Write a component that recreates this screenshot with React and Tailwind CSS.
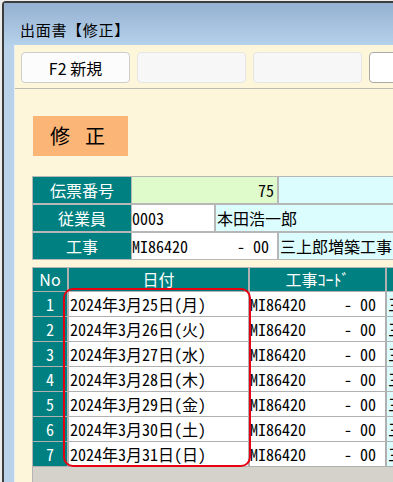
const rows = [
  { no: 1, date: "2024年3月25日(月)" },
  { no: 2, date: "2024年3月26日(火)" },
  { no: 3, date: "2024年3月27日(水)" },
  { no: 4, date: "2024年3月28日(木)" },
  { no: 5, date: "2024年3月29日(金)" },
  { no: 6, date: "2024年3月30日(土)" },
  { no: 7, date: "2024年3月31日(日)" },
];

const ui = "font-['Noto_Sans_CJK_JP',sans-serif]";
const mono = "font-['Noto_Sans_Mono_CJK_JP','Noto_Sans_CJK_JP',monospace]";

export default function App() {
  return (
    <div className={`w-[393px] h-[482px] overflow-hidden bg-[#ececec] pl-[2px] pt-[1px] ${ui}`}>
      <div className="flex h-full flex-col rounded-tl-[4px] border-l-2 border-t-2 border-[#3c3c3c] bg-[#b9d2ea]">
        {/* title bar */}
        <div className="h-[42px] shrink-0 bg-[linear-gradient(180deg,#95b1d1_0%,#a6c1de_50%,#b6d1ea_100%)] pl-[16px] pt-[18px] text-[15px] leading-[18px] tracking-[0.7px] text-black">
          出面書【修正】
        </div>

        <div className="flex flex-1 pl-[10px]">
          <div className="flex flex-1 flex-col border-l border-[#e9eef5] bg-[#fdf6da]">
            {/* toolbar */}
            <div className="flex h-[44px] shrink-0 gap-[7px] border-b border-[#bdbab0] pl-[6px] pt-[7px]">
              <div className="flex h-[31px] w-[109px] shrink-0 items-center justify-center rounded-[4px] border border-[#cdcdcd] bg-[#fcfcfc] text-[16px] text-black">
                F2 新規
              </div>
              <div className="h-[31px] w-[109px] shrink-0 rounded-[4px] border border-[#e6e6e6] bg-[#f7f7f7]" />
              <div className="h-[31px] w-[109px] shrink-0 rounded-[4px] border border-[#e6e6e6] bg-[#f7f7f7]" />
              <div className="h-[31px] w-[109px] shrink-0 rounded-[4px] border border-[#a9a9a9] bg-white" />
            </div>

            {/* content */}
            <div className="flex flex-1 flex-col pl-[17px]">
              <div className="mt-[27px] ml-[1px] flex h-[40px] w-[95px] items-center bg-[#fbb677] pl-[17px] text-[20px] text-black">
                <span>修</span>
                <span className="ml-[15px]">正</span>
              </div>

              {/* header info */}
              <div className="mt-[20px] flex flex-col gap-[2px] bg-[#b7b7b7] p-[1px] text-[16px] leading-[26px]">
                <div className="flex h-[26px] gap-[1px]">
                  <div className="w-[98px] shrink-0 bg-[#008080] text-center text-white">伝票番号</div>
                  <div className={`w-[145px] shrink-0 bg-[#e0fbcb] pr-[3px] text-right ${mono}`}>75</div>
                  <div className="ml-[1px] flex-1 bg-[#dcfdfd]" />
                </div>
                <div className="flex h-[26px] gap-[1px]">
                  <div className="w-[98px] shrink-0 bg-[#008080] text-center text-white">従業員</div>
                  <div className={`w-[82px] shrink-0 bg-white ${mono}`}>0003</div>
                  <div className="ml-[1px] flex-1 bg-[#dcfdfd] pl-[1px]">本田浩一郎</div>
                </div>
                <div className="flex h-[26px] gap-[1px]">
                  <div className="w-[98px] shrink-0 bg-[#008080] text-center text-white">工事</div>
                  <div className={`flex w-[145px] shrink-0 justify-between bg-white pr-[8px] ${mono}`}>
                    <span>MI86420</span>
                    <span>- 00</span>
                  </div>
                  <div className="ml-[1px] flex-1 overflow-hidden whitespace-nowrap bg-[#dcfdfd] pl-[1px]">三上郎増築工事</div>
                </div>
              </div>

              {/* detail grid */}
              <div className="relative mt-[7px] flex flex-1 flex-col border-l border-t border-[#b4b4b4] bg-[#d5d1cb]">
                <div className="grid grid-cols-[34px_179px_135px_1fr] gap-x-[2px] gap-y-[1px] bg-[#b0b0b0] pb-[1px] text-[16px]">
                  <div className="h-[23px] bg-[#008080] text-center leading-[23px] text-white">No</div>
                  <div className="h-[23px] bg-[#008080] text-center leading-[23px] text-white">日付</div>
                  <div className="h-[23px] bg-[#008080] text-center leading-[23px] text-white">工事ｺｰﾄﾞ</div>
                  <div className="h-[23px] bg-[#008080]" />
                  {rows.map((r) => (
                    <div key={r.no} className="contents">
                      <div className={`h-[24px] bg-[#008080] text-center leading-[24px] text-white ${mono}`}>{r.no}</div>
                      <div className={`h-[24px] whitespace-nowrap bg-white pl-[1px] leading-[24px] text-black ${mono}`}>{r.date}</div>
                      <div className={`flex h-[24px] justify-between bg-white pr-[9px] leading-[24px] text-black ${mono}`}>
                        <span>MI86420</span>
                        <span>- 00</span>
                      </div>
                      <div className="h-[24px] overflow-hidden whitespace-nowrap bg-[#dcfdfd] pl-[1px] leading-[24px] text-black">三上郎増築工事</div>
                    </div>
                  ))}
                </div>
                {/* highlight */}
                <div className="pointer-events-none absolute left-[30px] top-[20px] h-[179px] w-[188px] rounded-[10px] border-2 border-[#e60012]" />
              </div>
            </div>
          </div>
        </div>
      </div>
    </div>
  );
}
